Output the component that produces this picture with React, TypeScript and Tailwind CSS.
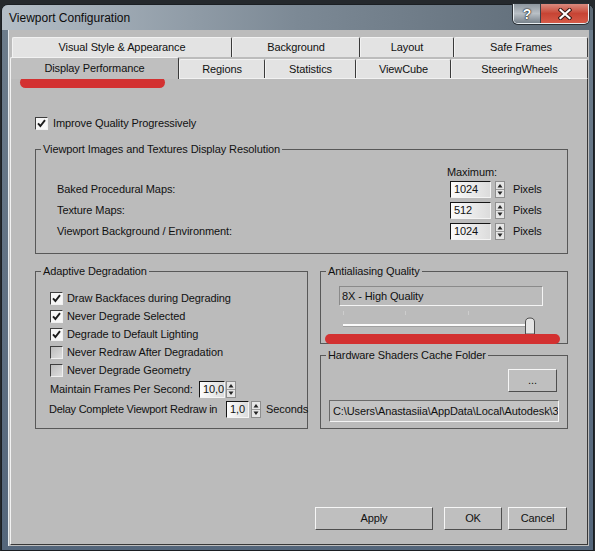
import React from 'react';

const Check = ({ on }: { on: boolean }) => (
  <span
    className={`w-[13px] h-[13px] shrink-0 flex items-center justify-center border border-t-[#3e3e3e] border-l-[#3e3e3e] border-r-[#f0f0f0] border-b-[#f0f0f0] ${
      on ? 'bg-[#f6f6f6]' : 'bg-gradient-to-br from-[#bdbdbd] to-[#dedede]'
    }`}
  >
    {on && (
      <svg width="9" height="9" viewBox="0 0 9 9">
        <path d="M1 4.3 L3.4 7 L8 1.2" fill="none" stroke="#1b1b1b" strokeWidth="1.9" />
      </svg>
    )}
  </span>
);

const Spin = ({ className = '' }: { className?: string }) => (
  <svg className={className} width="10" height="17" viewBox="0 0 10 17">
    <rect x="0.5" y="0.5" width="9" height="16" fill="#e6e6e6" stroke="#8e8e8e" />
    <line x1="1" y1="8.5" x2="9" y2="8.5" stroke="#9c9c9c" />
    <path d="M5 3 L7.5 6.5 L2.5 6.5Z" fill="#222" />
    <path d="M5 14 L7.5 10.5 L2.5 10.5Z" fill="#222" />
  </svg>
);

const Field = ({ value, className = '' }: { value: string; className?: string }) => (
  <span
    className={`h-[17px] shrink-0 flex items-center pl-[3px] border border-t-[#151515] border-l-[#151515] border-r-[#f4f4f4] border-b-[#f4f4f4] bg-gradient-to-r from-[#fcfcfc] to-[#dcdcdc] ${className}`}
  >
    {value}
  </span>
);

const Group = ({
  title,
  className = '',
  children,
}: {
  title: string;
  className?: string;
  children?: React.ReactNode;
}) => (
  <fieldset className={`border border-[#585858] min-w-0 flex flex-col ${className}`}>
    <legend className="ml-[5px] px-[2px] leading-[13px]">{title}</legend>
    {children}
  </fieldset>
);

const Button = ({ label, className = '' }: { label: string; className?: string }) => (
  <div
    className={`h-[23px] flex items-center justify-center bg-[#bfbfbf] border border-t-[#f6f6f6] border-l-[#f6f6f6] border-r-[#4e4e4e] border-b-[#4e4e4e] ${className}`}
  >
    {label}
  </div>
);

const Tab = ({ label, className = '' }: { label: string; className?: string }) => (
  <div
    className={`flex items-center justify-center rounded-t-[2px] border border-b-0 border-t-[#f2f2f2] border-l-[#f2f2f2] border-r-[#3a3a3a] bg-[#e3e3e3] ${className}`}
  >
    {label}
  </div>
);

const rows = [
  { label: 'Baked Procedural Maps:', value: '1024' },
  { label: 'Texture Maps:', value: '512' },
  { label: 'Viewport Background / Environment:', value: '1024' },
];

const degrade = [
  { label: 'Draw Backfaces during Degrading', on: true },
  { label: 'Never Degrade Selected', on: true },
  { label: 'Degrade to Default Lighting', on: true },
  { label: 'Never Redraw After Degradation', on: false },
  { label: 'Never Degrade Geometry', on: false },
];

export default function App() {
  return (
    <div className="relative w-[595px] h-[551px] bg-[#25292d] pt-[4px] pl-[1px] font-['Liberation_Sans',Arial,sans-serif] text-[11px] tracking-[-0.1px] text-[#111] leading-none overflow-hidden">
      <div className="w-[593px] h-[547px] rounded-t-[7px] border border-[#1b1f23] bg-gradient-to-b from-[#6d7d8c] to-[#54667b] flex flex-col">
        {/* Title bar */}
        <div className="h-[25px] flex items-center pl-[7px] rounded-t-[6px] bg-gradient-to-r from-[#b4bec7] via-[#7c8995] to-[#5d6a76]">
          <span className="text-[12px] tracking-normal text-[#0c0c0c]">Viewport Configuration</span>
          <div className="ml-auto mr-[4px] self-start -mt-px flex h-[20px] rounded-b-[5px] border border-t-0 border-[#e8eef2] overflow-hidden shadow-[0_0_0_1px_#2a2f34]">
            <div className="w-[27px] flex items-center justify-center bg-gradient-to-b from-[#8e979f] via-[#b9c0c6] to-[#78828b] border-r border-[#3a4048]">
              <span className="text-[14px] font-bold text-white [text-shadow:0_0_2px_#000,0_0_1px_#000]">?</span>
            </div>
            <div className="w-[47px] flex items-center justify-center bg-gradient-to-b from-[#d98a7e] via-[#c74434] to-[#d65a48]">
              <svg width="14" height="12" viewBox="0 0 14 12">
                <path d="M2.5 2 L11.5 10 M11.5 2 L2.5 10" stroke="#3a1a16" strokeWidth="4.2" strokeLinecap="square" />
                <path d="M2.5 2 L11.5 10 M11.5 2 L2.5 10" stroke="#ffffff" strokeWidth="2.2" strokeLinecap="square" />
              </svg>
            </div>
          </div>
        </div>

        {/* Client */}
        <div className="ml-[6px] w-[581px] h-[516px] bg-[#bcbcbc] border-l border-[#e4eaee] pt-[7px]">
          {/* Tab row 1 */}
          <div className="flex h-[20px] pl-[3px]">
            <Tab label="Visual Style & Appearance" className="w-[220px]" />
            <Tab label="Background" className="w-[128px]" />
            <Tab label="Layout" className="w-[94px]" />
            <Tab label="Safe Frames" className="w-[134px]" />
          </div>
          {/* Tab row 2 */}
          <div className="flex items-end h-[21px] pl-[1px]">
            <div className="relative z-10 w-[169px] h-[22px] -mb-px flex items-center justify-center pb-px rounded-t-[2px] border border-b-0 border-t-[#f2f2f2] border-l-[#f2f2f2] border-r-[#3a3a3a] bg-[#bfbfbf]">
              Display Performance
            </div>
            <Tab label="Regions" className="w-[86px] h-[19px]" />
            <Tab label="Statistics" className="w-[91px] h-[19px]" />
            <Tab label="ViewCube" className="w-[95px] h-[19px]" />
            <Tab label="SteeringWheels" className="w-[137px] h-[19px]" />
          </div>

          {/* Panel */}
          <div className="ml-px w-[578px] h-[467px] bg-[#bbbbbb] border border-t-[#f2f2f2] border-l-[#f2f2f2] border-r-[#383838] border-b-[#383838] pl-[24px]">
            <div className="w-[533px] flex flex-col">
              <label className="mt-[38px] h-[13px] flex items-center gap-[5px]">
                <Check on />
                <span>Improve Quality Progressively</span>
              </label>

              <Group title="Viewport Images and Textures Display Resolution" className="mt-[13px] h-[111px]">
                <div className="mt-[10px] h-[13px] flex items-center pl-[411px]">Maximum:</div>
                {rows.map((r) => (
                  <div key={r.label} className="h-[21px] flex items-center">
                    <span className="w-[414px] pl-[21px]">{r.label}</span>
                    <Field value={r.value} className="w-[41px]" />
                    <Spin className="ml-[4px]" />
                    <span className="ml-[8px]">Pixels</span>
                  </div>
                ))}
              </Group>

              <div className="mt-[11px] flex gap-[12px]">
                <Group title="Adaptive Degradation" className="w-[273px] h-[164px]">
                  <div className="mt-[11px] pl-[14px] flex flex-col">
                    {degrade.map((d) => (
                      <label key={d.label} className="h-[18px] flex items-center gap-[4px]">
                        <Check on={d.on} />
                        <span>{d.label}</span>
                      </label>
                    ))}
                  </div>
                  <div className="h-[20px] flex items-center pl-[14px] whitespace-nowrap">
                    <span className="w-[149px] shrink-0">Maintain Frames Per Second:</span>
                    <Field value="10,0" className="w-[26px] pl-[1px]" />
                    <Spin className="ml-px shrink-0" />
                  </div>
                  <div className="h-[20px] flex items-center pl-[13px] whitespace-nowrap">
                    <span className="w-[177px] shrink-0 tracking-[-0.25px]">Delay Complete Viewport Redraw in</span>
                    <Field value="1,0" className="w-[23px]" />
                    <Spin className="ml-[2px] shrink-0" />
                    <span className="ml-[5px]">Seconds</span>
                  </div>
                </Group>

                <div className="w-[248px] flex flex-col">
                  <Group title="Antialiasing Quality" className="h-[79px]">
                    <div className="mt-[8px] ml-[18px] w-[204px] h-[20px] flex items-center pl-[2px] border border-t-[#8a8a8a] border-l-[#8a8a8a] border-r-[#f4f4f4] border-b-[#f4f4f4]">
                      8X - High Quality
                    </div>
                    <svg className="ml-[18px]" width="210" height="30" viewBox="0 0 210 30">
                      <line x1="4.5" y1="5" x2="4.5" y2="9" stroke="#cdcdcd" />
                      <line x1="66.5" y1="5" x2="66.5" y2="9" stroke="#cdcdcd" />
                      <line x1="129.5" y1="5" x2="129.5" y2="9" stroke="#cdcdcd" />
                      <rect x="4" y="18" width="187" height="2" fill="#fbfbfb" />
                      <line x1="4" y1="20.5" x2="191" y2="20.5" stroke="#a0a0a0" />
                      <path d="M186.5 28 V16 Q186.5 12 191 12 Q195.5 12 195.5 16 V28 Z" fill="#e4e4e4" stroke="#4e4e4e" />
                    </svg>
                  </Group>
                  <Group title="Hardware Shaders Cache Folder" className="mt-[5px] h-[80px]">
                    <Button label="..." className="mt-[7px] self-end mr-[10px] w-[49px] h-[20px]" />
                    <div className="mt-[8px] ml-[8px] w-[230px] h-[22px] flex items-center pl-[3px] overflow-hidden whitespace-nowrap bg-[#c3c3c3] border border-t-[#6a6a6a] border-l-[#6a6a6a] border-r-[#f4f4f4] border-b-[#f4f4f4]">
                      C:\Users\Anastasiia\AppData\Local\Autodesk\3dsMax\2016 - 64bit
                    </div>
                  </Group>
                </div>
              </div>

              <div className="mt-[78px] flex justify-end pr-px">
                <Button label="Apply" className="w-[118px]" />
                <Button label="OK" className="ml-[11px] w-[58px]" />
                <Button label="Cancel" className="ml-[6px] w-[59px]" />
              </div>
            </div>
          </div>
        </div>
      </div>

      {/* red annotation marks */}
      <div className="absolute left-[20px] top-[77px] w-[145px] h-[11px] rounded-full bg-[#d33131]" />
      <div className="absolute left-[325px] top-[334px] w-[235px] h-[10px] rounded-full bg-[#d33131]" />
    </div>
  );
}
